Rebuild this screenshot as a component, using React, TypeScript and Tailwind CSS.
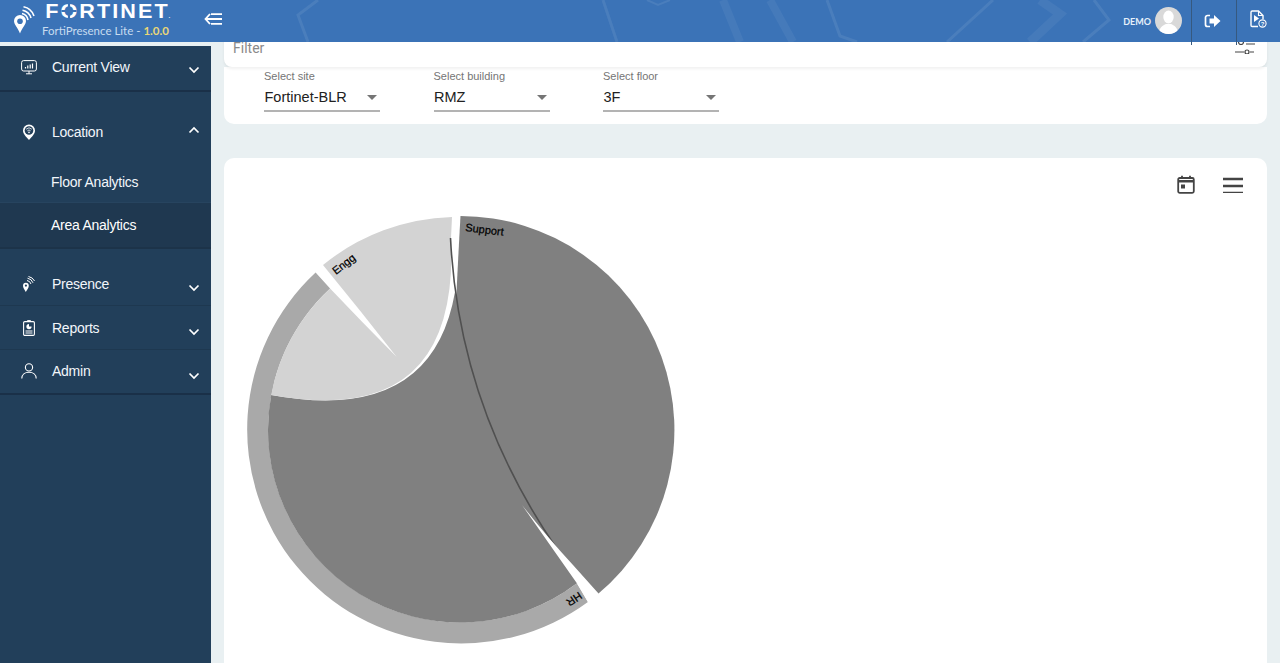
import React from "react";

const font = { fontFamily: '"Liberation Sans", Arial, sans-serif' };

function Chevron({ up = false, className = "" }: { up?: boolean; className?: string }) {
  return (
    <svg width="12" height="8" viewBox="0 0 12 8" className={className}>
      <path d={up ? "M1.5 6.5 L6 2 L10.5 6.5" : "M1.5 1.5 L6 6 L10.5 1.5"} fill="none" stroke="#ffffff" strokeWidth="1.7" />
    </svg>
  );
}

function MonitorIcon() {
  return (
    <svg width="16" height="15" viewBox="0 0 16 15" fill="none" stroke="#fff" strokeWidth="1">
      <rect x="0.6" y="0.6" width="14.8" height="10.4" rx="2" />
      <path d="M5 13.8 H11 M8 11 V13.8" />
      <path d="M4.5 8.5 V7 M6.8 8.5 V5.5 M9.2 8.5 V4.5 M11.5 8.5 V3.5" strokeWidth="1.2" />
    </svg>
  );
}

function PinWifiIcon() {
  return (
    <svg width="14" height="17" viewBox="0 0 14 17">
      <path d="M7 16 C4 12.5 1 10 1 6.5 A6 6 0 0 1 13 6.5 C13 10 10 12.5 7 16 Z" fill="#fff" />
      <circle cx="7" cy="6.5" r="4.3" fill="#223f5a" />
      <path d="M4.2 5.2 A4 4 0 0 1 9.8 5.2 M5.4 6.8 A2.2 2.2 0 0 1 8.6 6.8" fill="none" stroke="#fff" strokeWidth="0.8" />
      <circle cx="7" cy="8.4" r="0.8" fill="#fff" />
    </svg>
  );
}

function PresenceIcon() {
  return (
    <svg width="13" height="17" viewBox="0 0 13 17" fill="none">
      <path d="M3.8 16 C2.5 13.5 1 11.8 1 9.7 A2.9 2.9 0 0 1 6.8 9.7 C6.8 11.8 5.2 13.5 3.8 16 Z" fill="#fff" />
      <circle cx="3.9" cy="9.6" r="1.1" fill="#223f5a" />
      <path d="M5 4.5 A5 5 0 0 1 9 8 M5.5 2.2 A7 7 0 0 1 11 6.8 M6.5 0.5 A9 9 0 0 1 12.6 5" stroke="#fff" strokeWidth="1" />
    </svg>
  );
}

function ReportIcon() {
  return (
    <svg width="12" height="16" viewBox="0 0 12 16" fill="none">
      <rect x="0.6" y="1.6" width="10.8" height="13.8" rx="1.2" stroke="#fff" strokeWidth="1.1" />
      <path d="M4.5 1.6 V0.5 H7.5 V1.6" stroke="#fff" strokeWidth="0.9" />
      <path d="M6 4 A2.6 2.6 0 1 0 8.6 6.6 H6 Z" fill="#fff" />
      <path d="M2.5 11 H9.5 M2.5 13 H9.5" stroke="#fff" strokeWidth="1" />
    </svg>
  );
}

function UserIcon() {
  return (
    <svg width="16" height="16" viewBox="0 0 16 16" fill="none" stroke="#fff" strokeWidth="1.1">
      <circle cx="8" cy="4.4" r="3.6" />
      <path d="M0.8 15.6 C0.8 11.5 4 9.3 8 9.3 C12 9.3 15.2 11.5 15.2 15.6" />
    </svg>
  );
}

function NavRow({
  icon,
  label,
  up,
  className,
  chevronClass,
}: {
  icon: React.ReactNode;
  label: string;
  up?: boolean;
  className: string;
  chevronClass: string;
}) {
  return (
    <div className={`flex items-start pl-[20px] pr-[11px] ${className}`}>
      <div className="flex w-[17px] h-[18px] shrink-0 items-center justify-center">{icon}</div>
      <div className="ml-[15px] flex-1 text-[14px] leading-[18px] tracking-[-0.25px] text-[#f2f6fa]">{label}</div>
      <Chevron up={up} className={chevronClass} />
    </div>
  );
}

function Select({ label, value }: { label: string; value: string }) {
  return (
    <div className="w-[116px] mr-[53.5px]">
      <div className="text-[11px] leading-[13px] text-[#757575]">{label}</div>
      <div className="mt-[5px] flex h-[24px] items-center justify-between border-b-2 border-[#b3b3b3] pb-[4px]">
        <span className="ml-[0.5px] text-[14.5px] text-[#212121] leading-[18px]">{value}</span>
        <span className="mr-[3px] h-0 w-0 border-x-[5px] border-t-[5px] border-x-transparent border-t-[#757575]" />
      </div>
    </div>
  );
}

function Chord() {
  return (
    <svg width="440" height="440" viewBox="240 210 440 440" className="block">
      <path
        d="M587.9 601.9 A214 214 0 0 1 315.6 272.6 L330.1 288.4 A192.5 192.5 0 0 0 576.9 583.3 Z"
        fill="#a9a9a9"
      />
      <path
        d="M271.2 394.9 Q431.8 424.75 455 292 L590 590 L576.9 583.3 A192.5 192.5 0 0 1 271.2 394.9 Z"
        fill="#808080"
      />
      <path
        d="M460.5 216 A214 214 0 0 1 598.5 593.5 L588 590 Q479.2 454 456.4 295 Q458 260 460.5 216 Z"
        fill="#808080"
      />
      <path
        d="M323 265 A214 214 0 0 1 452 217 L451 238 Q460 430 271.2 394.9 A192.5 192.5 0 0 1 330.1 288.4 Q362 322 396.7 357 Q360 310 323 265 Z"
        fill="#d3d3d3"
      />
      <path d="M450.5 238 Q460 430 586 588" fill="none" stroke="#505050" strokeWidth="1.6" />
      <path d="M522 505 Q548 538 573 565 L598.5 593.5 L588 602 L576.9 583.3 Q550 545 522 505 Z" fill="#ffffff" />
      <g style={{ ...font, fontSize: 11, fill: "#000", stroke: "#000", strokeWidth: 0.25 }}>
        <text transform="translate(465 231) rotate(7)">Support</text>
        <text transform="translate(336 275) rotate(-38)">Engg</text>
        <text transform="translate(578.7 591.6) rotate(146)">HR</text>
      </g>
    </svg>
  );
}

export default function App() {
  return (
    <div className="flex h-[663px] w-[1280px] flex-col overflow-hidden bg-[#e9f0f2]" style={font}>
      <header className="relative z-10 flex h-[42px] shrink-0 items-start bg-[#3b73b7]">
        <svg width="1280" height="42" viewBox="0 0 1280 42" className="absolute left-0 top-0" fill="none" stroke="#ffffff" strokeOpacity="0.08">
          <path d="M318 0 L298 15 L308 42" strokeWidth="3" />
          <path d="M603 0 L617 42" strokeWidth="3" />
          <path d="M647 0 L658 5 L670 0" strokeWidth="2" />
          <path d="M723 0 L740 42" strokeWidth="8" strokeOpacity="0.05" />
          <path d="M770 0 L793 42" strokeWidth="8" strokeOpacity="0.05" />
          <path d="M827 0 L840 36 L857 42" strokeWidth="3" />
          <path d="M993 0 L947 42" strokeWidth="3" />
          <path d="M1040 0 L1060 14 L1030 42" strokeWidth="9" strokeOpacity="0.05" />
          <path d="M1094 0 L1109 20 L1083 42" strokeWidth="3" />
        </svg>

        <div className="relative ml-[13px] mt-[5px] w-[22px] shrink-0">
          <svg width="22" height="29" viewBox="0 0 22 29" fill="none">
            <path d="M7 28.5 C5 23 1 19.5 1 16 A6 6 0 0 1 13 16 C13 19.5 9 23 7 28.5 Z" fill="#fff" />
            <circle cx="7" cy="16.3" r="2.8" fill="#3b73b7" />
            <path d="M9 8.5 A8 8 0 0 1 15 15 M9.5 5.2 A11 11 0 0 1 18 13 M10.5 1.8 A14 14 0 0 1 21 11" stroke="#fff" strokeWidth="1.6" />
          </svg>
        </div>

        <div className="relative ml-[7px] w-[150px] shrink-0">
          <div className="flex h-[22px] origin-left scale-x-[1.08] items-center whitespace-nowrap pl-[3px] text-[20px] font-bold leading-[22px] tracking-[1.9px] text-white">
            F
            <span className="relative inline-block">
              O
              <span className="absolute left-[7px] top-[3px] h-[16px] w-[2px] bg-[#3b73b7]" />
              <span className="absolute left-[1px] top-[10px] h-[2px] w-[14px] bg-[#3b73b7]" />
            </span>
            RTINET
            <span className="ml-[-1px] mt-[10px] text-[6px] leading-[6px]">.</span>
          </div>
          <div className="mt-[2px] whitespace-nowrap text-[11.5px] leading-[14px] text-[#c8dcf0]" style={{ fontFamily: "Lato, sans-serif" }}>
            FortiPresence Lite - <span className="font-bold text-[#e9d777]">1.0.0</span>
          </div>
        </div>

        <svg width="18" height="12" viewBox="0 0 18 12" className="relative ml-[12px] mt-[13px] shrink-0" fill="none" stroke="#fff" strokeWidth="1.8">
          <path d="M6 1 L1.5 6 L6 11" />
          <path d="M2 6 H18 M7 1.2 H18 M7 10.8 H18" />
        </svg>

        <div className="flex-1" />

        <div className="relative mt-[15px] text-[9px] font-bold leading-[14px] text-[#e6f0fa]" style={{ fontFamily: "Lato, sans-serif" }}>DEMO</div>
        <div className="relative ml-[4px] mt-[7px] h-[27px] w-[27px] overflow-hidden rounded-full bg-[#d9d9d9]">
          <svg width="27" height="27" viewBox="0 0 27 27" fill="#fff">
            <ellipse cx="13.5" cy="10" rx="5.2" ry="6.5" />
            <path d="M4 27 C4 20 8 18.5 11 17 H16 C19 18.5 23 20 23 27 Z" />
          </svg>
        </div>

        <div className="relative ml-[9px] h-[45px] w-[45px] border-l border-[#36597f] flex justify-center pt-[14px]">
          <svg width="17" height="14" viewBox="0 0 17 14" fill="none" className="mr-[4px]">
            <path d="M6 1.5 H3.5 A2 2 0 0 0 1.5 3.5 V10.5 A2 2 0 0 0 3.5 12.5 H6" stroke="#fff" strokeWidth="1.7" />
            <path d="M5.5 4.5 H10 V1 L16.5 7 L10 13 V9.5 H5.5 Z" fill="#fff" />
          </svg>
        </div>

        <div className="relative h-[45px] w-[44px] border-l border-[#36597f] flex justify-center pt-[10px]">
          <svg width="17" height="18" viewBox="0 0 17 18" fill="none" stroke="#fff" className="mr-[1px]">
            <path d="M8 16.5 H2.2 A1.2 1.2 0 0 1 1 15.3 V2.2 A1.2 1.2 0 0 1 2.2 1 H8.5 L13 5.5 V9" strokeWidth="1.4" />
            <path d="M8.5 1 V5.5 H13" strokeWidth="1.1" />
            <path d="M4 5 L9 8.5 L4 12 Z" fill="#fff" stroke="none" />
            <circle cx="12.5" cy="13.5" r="3.6" strokeWidth="1.1" />
            <text x="12.5" y="15.6" textAnchor="middle" fontSize="6" fontWeight="700" fill="#fff" stroke="none">?</text>
          </svg>
        </div>
      </header>

      <div className="flex min-h-0 flex-1">
        <aside className="mt-[4px] flex w-[211px] shrink-0 flex-col bg-[#223f5a]">
          <NavRow icon={<MonitorIcon />} label="Current View" className="h-[46px] pt-[12px] border-b-[2px] border-[#1a3048]" chevronClass="mt-[8px]" />
          <NavRow icon={<PinWifiIcon />} label="Location" up className="h-[67px] pt-[31px]" chevronClass="mt-[3px]" />
          <div className="h-[44px] pl-[51px] pt-[14px] text-[14px] leading-[18px] tracking-[-0.25px] text-[#f2f6fa] border-b border-[#27445f]">Floor Analytics</div>
          <div className="h-[46px] bg-[#1f3850] pl-[51px] pt-[13px] text-[14px] leading-[18px] tracking-[-0.25px] text-[#ffffff] border-b-[2px] border-[#1c3349]">Area Analytics</div>
          <NavRow icon={<PresenceIcon />} label="Presence" className="h-[57px] pt-[26px] border-b border-[#1e3850]" chevronClass="mt-[9px]" />
          <NavRow icon={<ReportIcon />} label="Reports" className="h-[44px] pt-[13px] border-b border-[#1e3850]" chevronClass="mt-[9px]" />
          <NavRow icon={<UserIcon />} label="Admin" className="h-[45px] pt-[12px] border-b-[2px] border-[#1a3048]" chevronClass="mt-[10px]" />
        </aside>

        <main className="min-w-0 flex-1 pl-[13px] pr-[13px]">
          <div className="relative -mt-[14px] h-[39px] rounded-b-[8px] bg-white shadow-[0_2px_3px_rgba(0,0,0,0.06)]">
            <div className="absolute left-[9px] top-[12px] text-[14px] leading-[16px] text-[#8a8a8a]" style={{ fontFamily: "Roboto, sans-serif" }}>Filter</div>
            <svg width="21" height="14" viewBox="0 0 21 14" className="absolute right-[11px] top-[12px]" stroke="#444" strokeWidth="1.2" fill="none">
              <path d="M11 4 H20 M0 12 H9 M15 12 H19" />
              <circle cx="6" cy="2" r="2.5" />
              <circle cx="12" cy="12" r="2" />
            </svg>
          </div>
          <div className="flex h-[57px] rounded-b-[10px] bg-white pl-[40px] pt-[3px]">
            <Select label="Select site" value="Fortinet-BLR" />
            <Select label="Select building" value="RMZ" />
            <Select label="Select floor" value="3F" />
          </div>
          <div className="mt-[34px] h-[520px] rounded-t-[10px] bg-white">
            <div className="flex h-[52px] items-start justify-end pr-[24px] pt-[17px]">
              <svg width="18" height="19" viewBox="0 0 18 19" fill="none" className="mr-[28px]">
                <rect x="1.2" y="3" width="15.6" height="14.8" rx="1.5" stroke="#444" strokeWidth="1.8" />
                <path d="M1.2 5 H16.8 V7.5 H1.2 Z" fill="#444" />
                <path d="M5 0.8 V4 M13 0.8 V4" stroke="#444" strokeWidth="1.8" />
                <rect x="4" y="9.5" width="4" height="4" fill="#444" />
              </svg>
              <svg width="20" height="16" viewBox="0 0 20 16" stroke="#444" strokeWidth="2.4" className="mt-[2px]">
                <path d="M0 2 H20 M0 9 H20 M0 16 H20" />
              </svg>
            </div>
            <div className="pl-[16px]">
              <Chord />
            </div>
          </div>
        </main>
      </div>
    </div>
  );
}
